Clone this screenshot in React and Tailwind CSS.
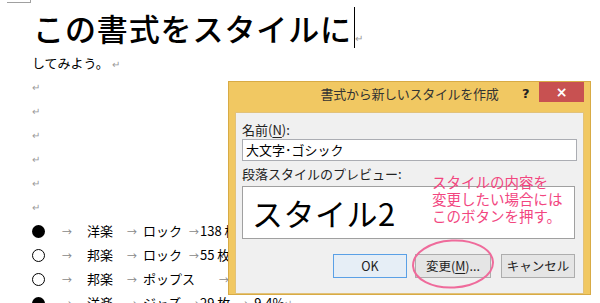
import React from 'react';

const jp = { fontFamily: '"Noto Sans CJK JP", "Noto Sans", sans-serif' };

function Ret() {
  return <span className="text-[10px] text-[#9a9a9a] leading-none">↵</span>;
}

function Tab({ w, pl = 'pl-[4px]' }) {
  return (
    <span className={`inline-flex items-center text-[10px] text-[#888] ${w}`}>
      <span className={pl}>→</span>
    </span>
  );
}

function Bullet({ filled }) {
  return (
    <span className="inline-flex w-[26px] items-center">
      <span
        className={
          filled
            ? 'block h-[13px] w-[13px] rounded-full bg-black'
            : 'block h-[13px] w-[13px] rounded-full border border-black bg-white'
        }
      />
    </span>
  );
}

const rows = [
  { filled: true, a: '洋楽', b: 'ロック', c: '138 枚', d: '44.7%' },
  { filled: false, a: '邦楽', b: 'ロック', c: '55 枚', d: '17.8%' },
  { filled: false, a: '邦楽', b: 'ポップス', c: '48 枚', d: '15.5%', wide: true },
  { filled: true, a: '洋楽', b: 'ジャズ', c: '29 枚', d: '9.4%' },
];

function Doc() {
  return (
    <div className="pl-[32px] text-black" style={jp}>
      <div className="flex h-[51px] items-center pt-[4px]">
        <span className="pl-[1px] text-[31px] font-medium leading-none tracking-[0.9px]">この書式をスタイルに</span>
        <span className="ml-[2px] h-[41px] w-px bg-black" />
        <span className="mt-[14px]"><Ret /></span>
      </div>
      <div className="flex h-[24px] items-center text-[13px]">
        <span>してみよう。</span>
        <span className="ml-[3px]"><Ret /></span>
      </div>
      {[0, 1, 2, 3, 4, 5].map((i) => (
        <div key={i} className="flex h-[24px] items-center">
          <Ret />
        </div>
      ))}
      {rows.map((r, i) => (
        <div key={i} className="flex h-[24px] items-center whitespace-nowrap text-[13px]">
          <Bullet filled={r.filled} />
          <Tab w="w-[29px]" />
          <span className="w-[36px]">{r.a}</span>
          <Tab w="w-[20px]" />
          <span className={r.wide ? 'w-[75px]' : 'w-[45px]'}>{r.b}</span>
          <Tab w="w-[12px]" pl="pl-[1px]" />
          <span className="pr-[4px]">{r.c}</span>
          <Tab w="w-[20px]" />
          <span>{r.d}</span>
          <Ret />
        </div>
      ))}
    </div>
  );
}

function Button({ children, primary, w }) {
  return (
    <div
      className={`flex h-[24px] ${w} items-center justify-center border text-[12.5px] text-[#222] ${
        primary ? 'border-[#5aa0e6] bg-[#e6eef6]' : 'border-[#adadad] bg-[#e5e5e5]'
      }`}
    >
      {children}
    </div>
  );
}

function Dialog() {
  return (
    <div
      className="absolute left-[228px] top-[81px] flex h-[214px] w-[363px] flex-col border border-[#d8ab45] bg-[#f1c862]"
      style={jp}
    >
      <div className="relative flex h-[30px] items-center justify-center">
        <span className="-translate-y-[3px] text-[13px] tracking-[-0.3px] text-[#333]">書式から新しいスタイルを作成</span>
        <span className="absolute left-[293px] top-[2px] text-[13px] font-bold text-[#222]" style={{ fontFamily: '"DejaVu Sans", sans-serif' }}>?</span>
        <div className="absolute right-[6px] top-0 flex h-[20px] w-[45px] items-center justify-center bg-[#c85151] text-[14px] font-bold text-white" style={{ fontFamily: '"DejaVu Sans", sans-serif' }}>
          ×
        </div>
      </div>
      <div className="mx-[6px] flex-1 border border-[#e2c27a] bg-[#f0f0f0] px-[6px]">
        <div className="flex h-[26px] items-end pb-[3px] text-[13px] leading-none text-[#222]">
          名前(<span className="underline underline-offset-2">N</span>):
        </div>
        <div className="flex h-[22px] items-center border border-[#abadb3] bg-white pl-[3px] text-[13px] text-black">
          大文字･ゴシック
        </div>
        <div className="flex h-[25px] items-center text-[13px] text-[#222]">段落スタイルのプレビュー:</div>
        <div className="flex h-[53px] w-[333px] items-center border border-[#a0a0a0] bg-white pl-[9px]">
          <span className="text-[31px] font-normal leading-none tracking-[0.5px] text-black">スタイル2</span>
        </div>
        <div className="mt-[15px] flex pl-[91px]">
          <Button primary w="w-[74px]">OK</Button>
          <div className="ml-[8px]">
            <Button w="w-[76px]">
              変更(<span className="underline underline-offset-2">M</span>)...
            </Button>
          </div>
          <div className="ml-[10px]">
            <Button w="w-[74px]">キャンセル</Button>
          </div>
        </div>
      </div>
    </div>
  );
}

export default function App() {
  return (
    <div className="relative h-[303px] w-[600px] overflow-hidden bg-white">
      <div className="absolute left-[7px] top-[2px] h-px w-[23px] bg-[#a0a0a0]" />
      <div className="absolute left-[30px] top-0 h-[3px] w-px bg-[#a0a0a0]" />
      <Doc />
      <Dialog />
      <div
        className="absolute left-[432px] top-[173px] text-[14.5px] leading-[17px] text-[#f2467f]"
        style={jp}
      >
        スタイルの内容を
        <br />
        変更したい場合には
        <br />
        このボタンを押す。
      </div>
      <svg className="absolute left-[410px] top-[238px]" width="86" height="52" viewBox="0 0 86 52">
        <ellipse cx="43" cy="26" rx="40" ry="23.5" fill="none" stroke="#ef6b9b" strokeWidth="2" transform="rotate(-3 43 26)" />
      </svg>
    </div>
  );
}
